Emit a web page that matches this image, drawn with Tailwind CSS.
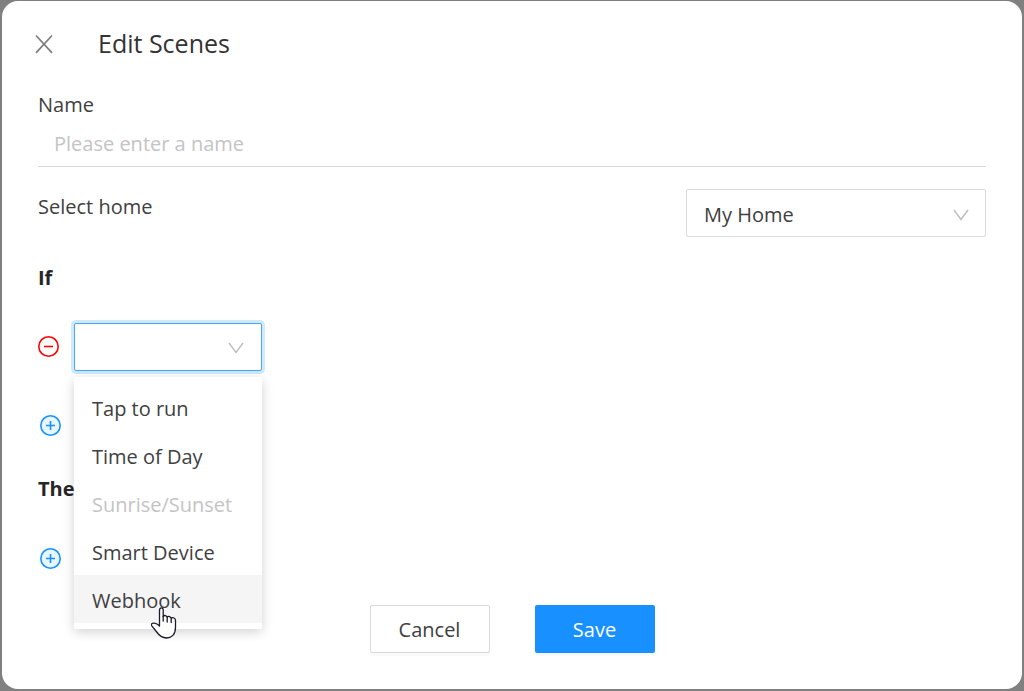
<!DOCTYPE html>
<html lang="en">
<head>
<meta charset="utf-8">
<meta name="viewport" content="width=device-width, initial-scale=1">
<title>Edit Scenes</title>
<script src="https://cdn.jsdelivr.net/npm/@tailwindcss/browser@4"></script>
</head>
<body class="flex min-h-screen bg-[#808080] px-0.5 pt-px pb-0.5 font-['Open_Sans','Noto_Sans',sans-serif] text-[20px] font-normal text-[#404040]">
<main role="dialog" aria-labelledby="title" class="flex-1 rounded-2xl bg-white px-9 pt-4">
  <header class="flex h-[54px] items-center">
    <button type="button" aria-label="Close" class="-ml-1 flex size-5 items-center justify-center text-[#808080]">
      <svg class="size-5" viewBox="0 0 20 20" fill="none" stroke="currentColor" stroke-width="1.800"><path d="M2 1.500 18 18.800M18 1.500 2 18.800"/></svg>
    </button>
    <h1 id="title" class="ml-11 text-[25px] text-[#333333]">Edit Scenes</h1>
  </header>

  <form>
    <label for="name" class="mt-[18px] flex h-8 items-center">Name</label>
    <input id="name" type="text" placeholder="Please enter a name" class="block h-[46px] w-full border-b border-[#d9d9d9] px-4 outline-none placeholder:text-[#c4c4c4]">

    <div class="mt-[22px] flex justify-between">
      <label for="home" class="flex h-9 items-center">Select home</label>
      <div class="relative w-[300px]">
        <select id="home" class="h-12 w-full appearance-none rounded-xs border border-[#d9d9d9] bg-white px-[17px] pt-1 outline-none">
          <option>My Home</option>
        </select>
        <svg class="pointer-events-none absolute top-[18px] right-[17px] size-4" viewBox="0 0 16 16" fill="none" stroke="#bfbfbf" stroke-width="1.500"><path d="M1 3 8 12.500 15 3"/></svg>
      </div>
    </div>

    <h2 class="mt-6 flex h-[34px] items-center font-bold text-[#262626]">If</h2>
    <div class="mt-7 flex items-center">
      <button type="button" aria-label="Remove condition" class="flex size-[22px] items-center">
        <svg class="size-[22px]" viewBox="0 0 22 22" fill="none" stroke="#ff0000" stroke-width="1.600"><circle cx="10.500" cy="10.500" r="9.700"/><path d="M6 10.500h9"/></svg>
      </button>
      <div class="relative ml-3.5 w-[188px]">
        <select id="condition" aria-label="Condition" class="block h-12 w-full appearance-none rounded-xs border border-[#40a9ff] bg-white px-[17px] ring-3 ring-[#1890ff]/20 outline-none">
          <option></option>
        </select>
        <svg class="pointer-events-none absolute top-[17px] right-[18px] size-4" viewBox="0 0 16 16" fill="none" stroke="#bfbfbf" stroke-width="1.500"><path d="M1 3 8 12.500 15 3"/></svg>
        <ul role="listbox" aria-label="Conditions" class="absolute top-full left-0 z-10 mt-1.5 w-full rounded-xs bg-white py-1.5 shadow-[0_3px_12px_rgba(0,0,0,0.18)]">
          <li role="option" class="flex h-12 items-center px-[18px] pt-1">Tap to run</li>
          <li role="option" class="flex h-12 items-center px-[18px] pt-1">Time of Day</li>
          <li role="option" aria-disabled="true" class="flex h-12 items-center px-[18px] pt-1 text-[#c4c4c4]">Sunrise/Sunset</li>
          <li role="option" class="flex h-12 items-center px-[18px] pt-1">Smart Device</li>
          <li role="option" class="relative flex h-12 items-center bg-[#f5f5f5] px-[18px] pt-1">Webhook
            <svg class="pointer-events-none absolute top-8 left-[77px] h-8 w-[26px]" viewBox="0 0 26 32" fill="#fff" stroke="#1c1a2b" stroke-width="1.300" stroke-linejoin="round" stroke-linecap="round">
              <path d="M8.500 18V3.200C8.500.2 12.200.2 12.200 3.200V9.500C13.300 7.900 15.700 8.300 16.200 10.200 17.400 8.900 19.700 9.400 20.200 11.200 22 10.100 24.500 11 24.500 13.500V20.500C24.500 27.500 20.500 31 15.500 31 10.800 31 7.800 28 5.300 24.500L.8 18.800C-.2 17 1 15.800 3.200 16.200 5.200 16.500 7 17.400 8.500 19Z"/>
              <path fill="none" d="M12.200 9.500V14M16.200 10.200V15M20.200 11.200V15.500"/>
            </svg>
          </li>
        </ul>
      </div>
    </div>
    <button type="button" aria-label="Add condition" class="mt-[43px] ml-0.5 flex h-6 items-center">
      <svg class="size-[22px]" viewBox="0 0 22 22" fill="none" stroke="#1890ff" stroke-width="1.600"><circle cx="10.500" cy="10.500" r="9.700" fill="#e6f7ff"/><path d="M6 10.500h9M10.500 6v9"/></svg>
    </button>

    <h2 class="mt-[35px] flex h-8 items-center font-bold text-[#262626]">Then</h2>
    <button type="button" aria-label="Add action" class="mt-[42px] ml-0.5 flex h-6 items-center">
      <svg class="size-[22px]" viewBox="0 0 22 22" fill="none" stroke="#1890ff" stroke-width="1.600"><circle cx="10.500" cy="10.500" r="9.700" fill="#e6f7ff"/><path d="M6 10.500h9M10.500 6v9"/></svg>
    </button>

    <div class="mt-[34px] flex justify-center gap-[45px]">
      <button type="button" class="h-12 w-[120px] rounded-xs border border-[#d9d9d9] bg-white pt-0.5 shadow-[0_3px_0_rgba(0,0,0,0.02)]">Cancel</button>
      <button type="submit" class="h-12 w-[120px] rounded-xs bg-[#1890ff] pt-0.5 text-white shadow-[0_3px_0_rgba(0,0,0,0.02)]">Save</button>
    </div>
  </form>
</main>
</body>
</html>
